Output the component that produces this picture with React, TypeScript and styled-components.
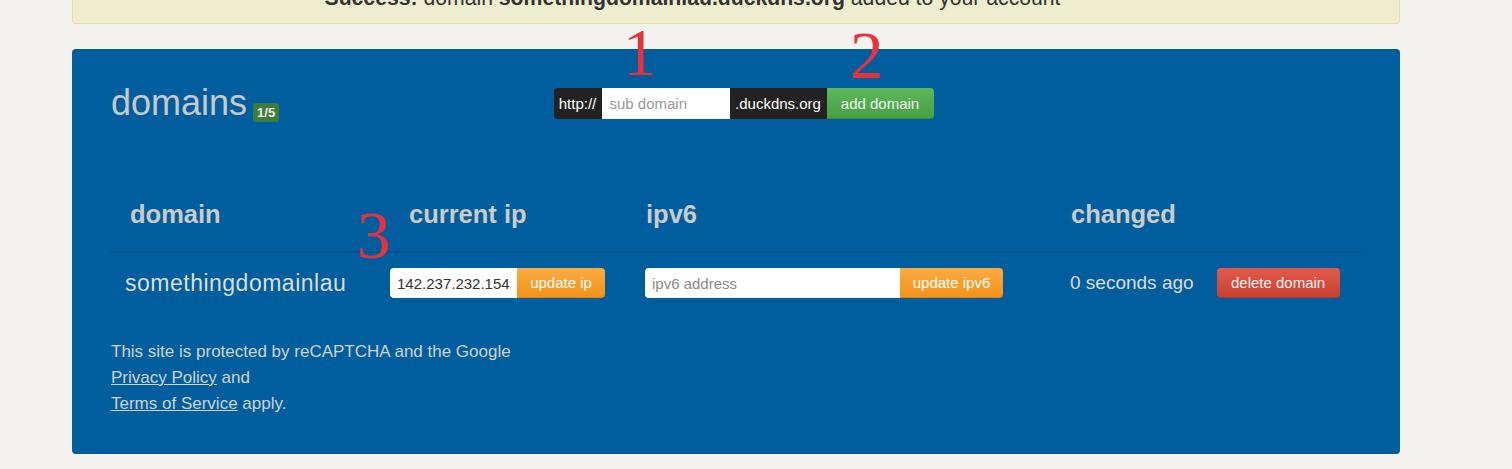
import React from "react";
import styled, { createGlobalStyle } from "styled-components";

const GlobalStyle = createGlobalStyle`
  html, body {
    margin: 0;
    padding: 0;
    background: #f4f3ef;
    font-family: "Liberation Sans", Arial, Helvetica, sans-serif;
  }
  * { box-sizing: border-box; }
`;

const Page = styled.div`
  position: relative;
  display: flow-root;
  padding: 0 112px 15px 72px;
`;

const Alert = styled.div`
  margin-top: -15px;
  background: #efedd0;
  border: 1px solid #e3df9f;
  border-top: none;
  border-radius: 0 0 4px 4px;
  padding: 0 87px 13px 0;
  text-align: center;
  font-size: 21.2px;
  line-height: 25px;
  color: #333;
  white-space: nowrap;
  b { font-weight: bold; }
`;

const Panel = styled.section`
  margin-top: 25px;
  background: #005e9e;
  border-radius: 4px;
  padding: 34px 38px 37px 39px;
`;

const TopRow = styled.div`
  display: grid;
  grid-template-columns: 1fr auto 1fr;
  align-items: start;
`;

const Heading = styled.h1`
  margin: 0;
  font-size: 36px;
  font-weight: normal;
  line-height: 40px;
  color: #c9c9c9;
  white-space: nowrap;
`;

const Badge = styled.span`
  display: inline-block;
  margin-left: 6px;
  padding: 0 4px;
  height: 19px;
  line-height: 19px;
  font-size: 13px;
  font-weight: bold;
  color: #eeeeee;
  background: #3f7b3b;
  border-radius: 3px;
  vertical-align: -1.5px;
`;

const AddForm = styled.form`
  display: flex;
  height: 31px;
  margin: 5px 0 0 14px;
`;

const Addon = styled.span<{ $w: number; $first?: boolean }>`
  width: ${(p) => p.$w}px;
  height: 31px;
  line-height: 31px;
  background: #222;
  color: #fff;
  font-size: 15px;
  text-align: center;
  white-space: nowrap;
  border-radius: ${(p) => (p.$first ? "4px 0 0 4px" : "0")};
`;

const SubInput = styled.input`
  width: 128px;
  height: 31px;
  border: none;
  outline: none;
  padding: 0 8px;
  font-family: inherit;
  font-size: 15px;
  color: #333;
  background: #fff;
  &::placeholder { color: #9a9a9a; }
`;

const GreenButton = styled.button`
  width: 107px;
  height: 31px;
  border: none;
  border-bottom: 1px solid #3c8a3a;
  border-radius: 0 4px 4px 0;
  background: linear-gradient(#5cb85a, #47a044);
  color: #f2f2f2;
  font-family: inherit;
  font-size: 15px;
  padding: 0;
`;

const Table = styled.div`
  display: grid;
  grid-template-columns: 279px 255px 425px 1fr;
  margin-top: 76px;
`;

const HeaderCell = styled.div<{ $indent: number }>`
  padding: 0 0 22px ${(p) => p.$indent}px;
  font-size: 25.5px;
  font-weight: bold;
  line-height: 30px;
  color: #cbcbcb;
  border-bottom: 2px solid #00528a;
  white-space: nowrap;
`;

const Cell = styled.div<{ $indent?: number }>`
  display: flex;
  align-items: center;
  height: 60px;
  padding: 15px 0 15px ${(p) => p.$indent ?? 0}px;
`;

const DomainName = styled.span`
  font-size: 23px;
  letter-spacing: 0.5px;
  color: #dcdcdc;
  white-space: nowrap;
`;

const InputGroup = styled.div`
  display: flex;
  height: 30px;
`;

const TextInput = styled.input<{ $w: number }>`
  width: ${(p) => p.$w}px;
  height: 30px;
  border: none;
  outline: none;
  border-radius: 4px 0 0 4px;
  padding: 0 7px;
  font-family: inherit;
  font-size: 15px;
  color: #333;
  background: #fff;
  &::placeholder { color: #8a8a8a; }
`;

const OrangeButton = styled.button<{ $w: number }>`
  width: ${(p) => p.$w}px;
  height: 30px;
  border: none;
  border-bottom: 1px solid #d98414;
  border-radius: 0 4px 4px 0;
  background: linear-gradient(#fbab44, #f39317);
  color: #fff;
  font-family: inherit;
  font-size: 15px;
  padding: 0;
`;

const Changed = styled.span`
  font-size: 19px;
  color: #dcdcdc;
  white-space: nowrap;
`;

const DeleteButton = styled.button`
  margin-left: 23px;
  width: 123px;
  height: 30px;
  border: none;
  border-bottom: 1px solid #b23a2a;
  border-radius: 4px;
  background: linear-gradient(#e15a4c, #c8412f);
  color: #f4f4f4;
  font-family: inherit;
  font-size: 15px;
  padding: 0;
`;

const Footer = styled.p`
  margin: 26px 0 0;
  font-size: 17px;
  line-height: 26px;
  color: #d2d2d2;
  a { color: inherit; text-decoration: underline; }
`;

const Annotation = styled.span<{ $x: number; $y: number }>`
  position: absolute;
  left: ${(p) => p.$x}px;
  top: ${(p) => p.$y}px;
  font-family: "Liberation Serif", "Times New Roman", serif;
  font-size: 67px;
  line-height: 1;
  color: #e5323c;
  pointer-events: none;
`;

export default function App() {
  return (
    <>
      <GlobalStyle />
      <Page>
        <Alert>
          <b>Success:</b> domain <b>somethingdomainlau.duckdns.org</b> added to your account
        </Alert>
        <Panel>
          <TopRow>
            <Heading>
              domains<Badge>1/5</Badge>
            </Heading>
            <AddForm onSubmit={(e) => e.preventDefault()}>
              <Addon $w={48} $first>http://</Addon>
              <SubInput placeholder="sub domain" />
              <Addon $w={97}>.duckdns.org</Addon>
              <GreenButton type="button">add domain</GreenButton>
            </AddForm>
            <div />
          </TopRow>
          <Table>
            <HeaderCell $indent={19}>domain</HeaderCell>
            <HeaderCell $indent={19}>current ip</HeaderCell>
            <HeaderCell $indent={1}>ipv6</HeaderCell>
            <HeaderCell $indent={1}>changed</HeaderCell>
            <Cell $indent={14}>
              <DomainName>somethingdomainlau</DomainName>
            </Cell>
            <Cell>
              <InputGroup>
                <TextInput $w={127} defaultValue="142.237.232.154" />
                <OrangeButton $w={88} type="button">update ip</OrangeButton>
              </InputGroup>
            </Cell>
            <Cell>
              <InputGroup>
                <TextInput $w={255} placeholder="ipv6 address" />
                <OrangeButton $w={103} type="button">update ipv6</OrangeButton>
              </InputGroup>
            </Cell>
            <Cell>
              <Changed>0 seconds ago</Changed>
              <DeleteButton type="button">delete domain</DeleteButton>
            </Cell>
          </Table>
          <Footer>
            This site is protected by reCAPTCHA and the Google
            <br />
            <a href="#privacy">Privacy Policy</a> and
            <br />
            <a href="#terms">Terms of Service</a> apply.
          </Footer>
        </Panel>
        <Annotation $x={623} $y={19}>1</Annotation>
        <Annotation $x={850} $y={22}>2</Annotation>
        <Annotation $x={357} $y={202}>3</Annotation>
      </Page>
    </>
  );
}
